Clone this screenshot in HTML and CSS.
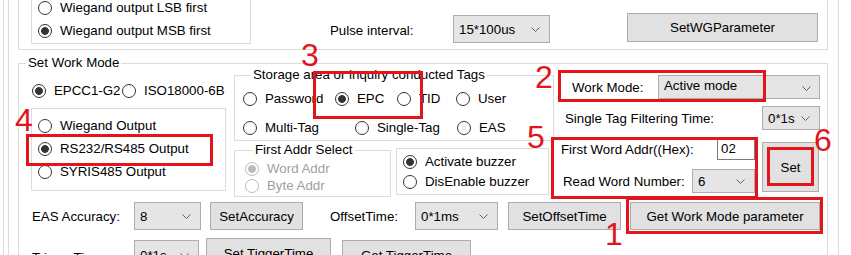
FILE: index.html
```html
<!DOCTYPE html>
<html lang="en">
<head>
    <meta charset="UTF-8">
    <title>Set Work Mode</title>
    <link rel="stylesheet" href="styles.css">
</head>
<body>

<div class="screen">
    <div class="edge-left"></div>

    <div class="main">
        <div class="wg">
            <div class="wg-inner">
                <label class="radio"><input type="radio" name="wg">Wiegand output LSB first</label>
                <label class="radio gap7"><input type="radio" name="wg" checked>Wiegand output MSB first</label>
            </div>
            <span class="wg-label">Pulse interval:</span>
            <div class="combo wg-combo"><span>15*100us</span><svg width="9" height="5"><polyline points="0.5,0.5 4.5,4.5 8.5,0.5"/></svg></div>
            <button class="btn wg-btn">SetWGParameter</button>
        </div>

        <fieldset class="wm">
            <legend>Set Work Mode</legend>
            <div class="wm-top">
                <div class="col-a">
                    <div class="proto-row">
                        <label class="radio proto"><input type="radio" name="proto" checked>EPCC1-G2</label>
                        <label class="radio"><input type="radio" name="proto">ISO18000-6B</label>
                    </div>
                    <div class="out-box">
                        <label class="radio"><input type="radio" name="out">Wiegand Output</label>
                        <label class="radio gap7"><input type="radio" name="out" checked>RS232/RS485 Output</label>
                        <label class="radio gap7"><input type="radio" name="out">SYRIS485 Output</label>
                    </div>
                </div>

                <div class="col-b">
                    <fieldset class="storage">
                        <legend>Storage area or inquiry conducted Tags</legend>
                        <div class="tags">
                            <label class="radio"><input type="radio" name="mem">Password</label>
                            <label class="radio"><input type="radio" name="mem" checked>EPC</label>
                            <label class="radio"><input type="radio" name="mem">TID</label>
                            <label class="radio"><input type="radio" name="mem">User</label>
                        </div>
                        <div class="tags tags2">
                            <label class="radio"><input type="radio" name="mem">Multi-Tag</label>
                            <label class="radio"><input type="radio" name="mem">Single-Tag</label>
                            <label class="radio"><input type="radio" name="mem">EAS</label>
                        </div>
                    </fieldset>
                    <div class="addr-row">
                        <fieldset class="addr">
                            <legend>First Addr Select</legend>
                            <label class="radio off"><input type="radio" name="addr" checked disabled>Word Addr</label>
                            <label class="radio off gap1"><input type="radio" name="addr" disabled>Byte Addr</label>
                        </fieldset>
                        <div class="buzzer">
                            <label class="radio"><input type="radio" name="buzz" checked>Activate buzzer</label>
                            <label class="radio gap4"><input type="radio" name="buzz">DisEnable buzzer</label>
                        </div>
                    </div>
                </div>

                <div class="col-c">
                    <div class="row-mode">
                        <span class="lbl-mode">Work Mode:</span>
                        <div class="combo combo-mode"><span>Active mode</span><svg width="9" height="5"><polyline points="0.5,0.5 4.5,4.5 8.5,0.5"/></svg></div>
                    </div>
                    <div class="row-filter">
                        <span class="lbl-filter">Single Tag Filtering Time:</span>
                        <div class="combo combo-filter"><span>0*1s</span><svg width="9" height="5"><polyline points="0.5,0.5 4.5,4.5 8.5,0.5"/></svg></div>
                    </div>
                    <div class="row-word">
                        <div class="word-fields">
                            <div class="row-first">
                                <span class="lbl-first">First Word Addr((Hex):</span>
                                <input class="text-addr" type="text" value="02">
                            </div>
                            <div class="row-read">
                                <span class="lbl-read">Read Word Number:</span>
                                <div class="combo combo-read"><span>6</span><svg width="9" height="5"><polyline points="0.5,0.5 4.5,4.5 8.5,0.5"/></svg></div>
                            </div>
                        </div>
                        <button class="btn btn-set">Set</button>
                    </div>
                </div>
            </div>

            <div class="eas-row">
                <span class="lbl-eas">EAS Accuracy:</span>
                <div class="combo combo-eas"><span>8</span><svg width="9" height="5"><polyline points="0.5,0.5 4.5,4.5 8.5,0.5"/></svg></div>
                <button class="btn btn-acc">SetAccuracy</button>
                <span class="lbl-offset">OffsetTime:</span>
                <div class="combo combo-offset"><span>0*1ms</span><svg width="9" height="5"><polyline points="0.5,0.5 4.5,4.5 8.5,0.5"/></svg></div>
                <button class="btn btn-offset">SetOffsetTime</button>
                <button class="btn btn-get">Get Work Mode parameter</button>
            </div>

            <div class="trig-row">
                <span class="lbl-trig">TriggerTime:</span>
                <div class="combo combo-trig"><span>0*1s</span><svg width="9" height="5"><polyline points="0.5,0.5 4.5,4.5 8.5,0.5"/></svg></div>
                <button class="btn btn-settrig">Set TiggerTime</button>
                <button class="btn btn-gettrig">Get TiggerTime</button>
            </div>
        </fieldset>
    </div>

    <div class="edge-right"></div>

    <!-- red annotations -->
    <div class="mark mark-1"></div>
    <div class="mark mark-2"></div>
    <div class="mark mark-3"></div>
    <div class="mark mark-4"></div>
    <div class="mark mark-5"></div>
    <div class="mark mark-6"></div>
    <span class="num num-1">1</span>
    <span class="num num-2">2</span>
    <span class="num num-3">3</span>
    <span class="num num-4">4</span>
    <span class="num num-5">5</span>
    <span class="num num-6">6</span>
</div>

</body>
</html>
```

FILE: styles.css
```css
* {
    box-sizing: border-box;
}
body {
    margin: 0;
    width: 851px;
    height: 255px;
    overflow: hidden;
    background: #fff;
    font-family: "Liberation Sans", Arial, sans-serif;
    font-size: 13.3px;
    color: #000;
}
.screen {
    position: relative;
    display: flex;
    height: 255px;
}
.edge-left {
    flex: none;
    margin-left: 3px;
    width: 6px;
    border-left: 1px solid #dcdcdc;
    border-right: 1px solid #dcdcdc;
}
.main {
    flex: none;
    width: 810px;
    margin-left: 9px;
}
.edge-right {
    flex: none;
    margin-left: 10px;
    border-left: 1px solid #dcdcdc;
}

/* radios */
.radio {
    display: flex;
    align-items: center;
    height: 16px;
    line-height: 16px;
    white-space: nowrap;
}
.radio input {
    -webkit-appearance: none;
    appearance: none;
    flex: none;
    width: 14px;
    height: 14px;
    margin: 0 8px 0 0;
    border: 1px solid #333;
    border-radius: 50%;
    background: #fff;
}
.radio input:checked {
    background: radial-gradient(circle, #333 0 3.5px, #fff 4.3px);
}
.radio.off {
    color: #a0a0a0;
}
.radio.off input {
    border-color: #bcbcbc;
}
.radio.off input:checked {
    background: radial-gradient(circle, #bcbcbc 0 3.5px, #fff 4.3px);
}
.gap7 { margin-top: 7px; }
.gap4 { margin-top: 4px; }
.gap1 { margin-top: 1px; }

/* controls */
.combo {
    display: flex;
    align-items: center;
    justify-content: space-between;
    height: 28px;
    padding: 0 9px 0 5px;
    background: #e5e5e5;
    border: 1px solid #adadad;
    white-space: nowrap;
}
.combo svg {
    flex: none;
}
.combo polyline {
    fill: none;
    stroke: #606060;
    stroke-width: 1;
}
.btn {
    height: 28px;
    padding: 0;
    background: #e1e1e1;
    border: 1px solid #adadad;
    font-family: inherit;
    font-size: 13.3px;
    color: #000;
}

/* wiegand block */
.wg {
    display: flex;
    align-items: flex-start;
    height: 50px;
    border: 1px solid #dcdcdc;
    border-top: 0;
}
.wg-inner {
    margin-left: 12px;
    width: 220px;
    height: 44px;
    padding-left: 6px;
    border: 1px solid #dcdcdc;
    border-top: 0;
}
.wg-label {
    width: 123px;
    margin: 23px 0 0 79px;
    line-height: 16px;
}
.wg-combo {
    width: 97px;
    margin-top: 15px;
}
.wg-btn {
    width: 191px;
    height: 29px;
    margin: 13px 0 0 77px;
}

/* set work mode group */
fieldset {
    margin: 0;
    padding: 0;
    min-width: 0;
    border: 1px solid #dcdcdc;
}
legend {
    padding: 0 2px;
    line-height: 16px;
}
.wm {
    margin-top: 5px;
    height: 260px;
}
.wm > legend {
    margin-left: 7px;
}
.wm-top {
    display: flex;
    height: 131px;
}
.col-a {
    flex: none;
    width: 215px;
    padding-left: 12px;
}
.proto-row {
    display: flex;
    margin: 12px 0 0 1px;
}
.proto {
    width: 90px;
}
.out-box {
    width: 195px;
    height: 83px;
    margin-top: 9px;
    padding: 9px 0 0 6px;
    border: 1px solid #dcdcdc;
}

.col-b {
    flex: none;
    width: 320px;
}
.storage {
    width: 320px;
    margin-top: -4px;
    padding: 8px 0 4px 8px;
}
.storage legend,
.addr legend {
    margin-left: 8px;
}
.tags {
    display: grid;
    grid-template-columns: 92px 62px 59px auto;
}
.tags2 {
    grid-template-columns: 112px 102px auto;
    margin-top: 13px;
}
.addr-row {
    display: flex;
    align-items: flex-start;
    margin-top: 1px;
}
.addr {
    width: 157px;
    padding: 3px 0 2px 10px;
}
.buzzer {
    width: 153px;
    height: 47px;
    margin: 6px 0 0 5px;
    padding: 5px 0 0 6px;
    border: 1px solid #dcdcdc;
}

.col-c {
    flex: 1;
    padding-right: 7px;
}
.row-mode,
.row-filter,
.row-first,
.row-read {
    display: flex;
    align-items: center;
    justify-content: space-between;
}
.row-mode {
    margin-top: 4px;
}
.lbl-mode {
    padding-left: 18px;
}
.combo-mode {
    width: 162px;
    height: 24px;
    align-items: flex-start;
    padding-top: 2px;
    padding-right: 8px;
}
.combo-mode svg {
    margin-top: 8px;
}
.row-filter {
    margin-top: 7px;
}
.lbl-filter {
    padding-left: 11px;
}
.combo-filter {
    width: 58px;
    height: 24px;
}
.row-word {
    display: flex;
    align-items: flex-start;
}
.word-fields {
    width: 201px;
}
.row-first {
    margin-top: 9px;
}
.lbl-first {
    padding-left: 7px;
}
.text-addr {
    width: 38px;
    height: 23px;
    padding: 0 3px;
    border: 1px solid #7a7a7a;
    font-family: inherit;
    font-size: 13.3px;
    line-height: 16px;
    align-self: flex-start;
    margin-top: -2px;
}
.row-read {
    margin-top: 9px;
}
.lbl-read {
    padding-left: 9px;
}
.combo-read {
    width: 63px;
    height: 24px;
}
.btn-set {
    width: 57px;
    height: 50px;
    margin: 12px 0 0 7px;
}

.eas-row,
.trig-row {
    display: flex;
    align-items: center;
}
.lbl-eas {
    width: 115px;
    padding-left: 13px;
}
.combo-eas {
    width: 67px;
}
.btn-acc {
    width: 93px;
    margin-left: 9px;
}
.lbl-offset {
    width: 85px;
    margin-left: 27px;
}
.combo-offset {
    width: 83px;
}
.btn-offset {
    width: 113px;
    margin-left: 10px;
}
.btn-get {
    width: 190px;
    margin-left: 9px;
}
.trig-row {
    align-items: flex-start;
    margin-top: 8px;
}
.lbl-trig {
    width: 115px;
    padding-left: 13px;
    margin-top: 12px;
}
.combo-trig {
    width: 65px;
    height: 30px;
    margin-top: 2px;
}
.btn-settrig {
    width: 125px;
    height: 31px;
    margin-left: 7px;
}
.btn-gettrig {
    width: 129px;
    height: 31px;
    margin: 2px 0 0 11px;
}

/* annotations */
.mark {
    position: absolute;
    border: 3px solid #e3151c;
}
.mark-1 { left: 626px; top: 197px; width: 197px; height: 37px; }
.mark-2 { left: 558px; top: 70px; width: 208px; height: 32px; }
.mark-3 { left: 313px; top: 71px; width: 110px; height: 48px; }
.mark-4 { left: 26px; top: 134px; width: 187px; height: 32px; }
.mark-5 { left: 551px; top: 137px; width: 207px; height: 62px; }
.mark-6 { left: 767px; top: 147px; width: 47px; height: 39px; }
.num {
    position: absolute;
    font-size: 32px;
    line-height: 32px;
    color: #e3151c;
}
.num-1 { left: 605px; top: 218px; }
.num-2 { left: 535px; top: 61px; }
.num-3 { left: 301px; top: 39px; }
.num-4 { left: 15px; top: 104px; }
.num-5 { left: 527px; top: 121px; }
.num-6 { left: 814px; top: 124px; }
```
